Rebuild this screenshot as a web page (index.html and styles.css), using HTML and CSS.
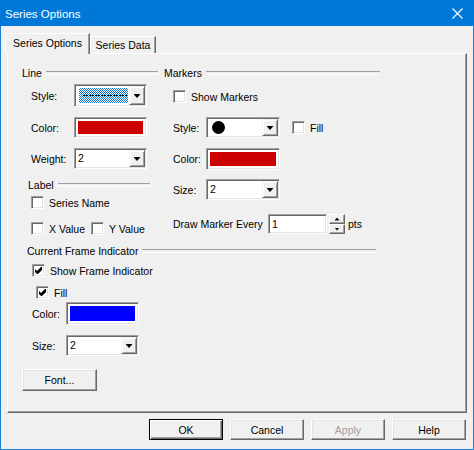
FILE: index.html
```html
<!DOCTYPE html>
<html lang="en">
<head>
<meta charset="utf-8">
<title>Series Options</title>
<link rel="stylesheet" href="styles.css">
</head>
<body>
<div class="window">
  <div class="titlebar">
    <span class="title">Series Options</span>
    <svg class="close" width="11" height="11" viewBox="0 0 11 11"><path d="M0.5 0.5L10.5 10.5M10.5 0.5L0.5 10.5" stroke="#fff" stroke-width="1.1" fill="none"/></svg>
  </div>
  <div class="client">
    <div class="tabs">
      <div class="tab active">Series Options</div>
      <div class="tab inactive">Series Data</div>
    </div>
    <div class="panel">
      <div class="cols">
        <div class="col col-left">
          <div class="group-h"><span>Line</span></div>
          <div class="row r-lstyle">
            <span class="lbl lw-left">Style:</span>
            <div class="combo w-73 h-23">
              <div class="field pattern"><span class="dotline"></span></div>
              <span class="drop"><i class="arrow"></i></span>
            </div>
          </div>
          <div class="row r-lcolor">
            <span class="lbl lw-left">Color:</span>
            <div class="swatch w-73 h-21"><span class="fill red"></span></div>
          </div>
          <div class="row r-weight">
            <span class="lbl lw-left">Weight:</span>
            <div class="combo w-73 h-21"><div class="field">2</div><span class="drop"><i class="arrow"></i></span></div>
          </div>
          <div class="group-h h-label"><span>Label</span></div>
          <div class="row r-sname">
            <label class="chk"><span class="box"></span>Series Name</label>
          </div>
          <div class="row r-xy">
            <label class="chk chk-x"><span class="box"></span>X Value</label>
            <label class="chk"><span class="box"></span>Y Value</label>
          </div>
        </div>
        <div class="col col-right">
          <div class="group-h"><span>Markers</span></div>
          <div class="row r-show">
            <label class="chk"><span class="box"></span>Show Markers</label>
          </div>
          <div class="row r-mstyle">
            <span class="lbl lw-right">Style:</span>
            <div class="combo w-74 h-21">
              <div class="field"><span class="dot"></span></div>
              <span class="drop"><i class="arrow"></i></span>
            </div>
            <label class="chk chk-mfill"><span class="box"></span>Fill</label>
          </div>
          <div class="row r-mcolor">
            <span class="lbl lw-right">Color:</span>
            <div class="swatch w-74 h-22"><span class="fill red"></span></div>
          </div>
          <div class="row r-msize">
            <span class="lbl lw-right">Size:</span>
            <div class="combo w-74 h-21"><div class="field">2</div><span class="drop"><i class="arrow"></i></span></div>
          </div>
          <div class="row r-draw">
            <span class="lbl lw-draw">Draw Marker Every</span>
            <div class="edit">1</div>
            <div class="spin">
              <span class="spin-btn"><i class="up"></i></span>
              <span class="spin-btn"><i class="down"></i></span>
            </div>
            <span class="pts">pts</span>
          </div>
        </div>
      </div>
      <div class="bottom">
        <div class="group-h h-cfi"><span>Current Frame Indicator</span></div>
        <div class="row r-sfi">
          <label class="chk"><span class="box"><svg class="tick" width="7" height="7" viewBox="0 0 7 7"><polygon points="0,2 2,4 6,0 7,0 7,3 3,7 2,7 0,5" fill="#000"/></svg></span>Show Frame Indicator</label>
        </div>
        <div class="row r-ffill">
          <label class="chk"><span class="box"><svg class="tick" width="7" height="7" viewBox="0 0 7 7"><polygon points="0,2 2,4 6,0 7,0 7,3 3,7 2,7 0,5" fill="#000"/></svg></span>Fill</label>
        </div>
        <div class="row r-fcolor">
          <span class="lbl lw-bottom">Color:</span>
          <div class="swatch w-73 h-23"><span class="fill blue"></span></div>
        </div>
        <div class="row r-fsize">
          <span class="lbl lw-bottom">Size:</span>
          <div class="combo w-73 h-21"><div class="field">2</div><span class="drop"><i class="arrow"></i></span></div>
        </div>
        <div class="btn btn-font">Font...</div>
      </div>
    </div>
    <div class="buttons">
      <div class="btn default">OK</div>
      <div class="btn">Cancel</div>
      <div class="btn disabled">Apply</div>
      <div class="btn">Help</div>
    </div>
  </div>
</div>
</body>
</html>
```

FILE: styles.css
```css
* { box-sizing: border-box; }
html, body { margin: 0; padding: 0; }
body {
  width: 474px;
  height: 450px;
  overflow: hidden;
  background: #f0f0f0;
  font-family: "Liberation Sans", Arial, sans-serif;
  font-size: 10.5px;
  color: #000;
}
.window {
  width: 474px;
  height: 450px;
  display: flex;
  flex-direction: column;
  background: #f0f0f0;
}
.titlebar {
  height: 26px;
  flex: none;
  background: #0078d7;
  display: flex;
  align-items: center;
  justify-content: space-between;
  padding: 0 11px 0 5px;
}
.title {
  color: #fff;
  font-size: 11.5px;
  margin-top: 1px;
}
.close { display: block; margin-top: 1px; }
.client {
  flex: 1;
  border: 1px solid #1a7fd6;
  border-top: none;
  padding: 7px 6px 0 6px;
  display: flex;
  flex-direction: column;
}

/* tabs */
.tabs {
  display: flex;
  align-items: flex-end;
  margin-left: -2px;
  position: relative;
  z-index: 1;
}
.tab {
  background: #f0f0f0;
  display: flex;
  justify-content: center;
  border-top: 1px solid #fff;
  border-left: 1px solid #fff;
  border-right: 1px solid #696969;
  box-shadow: inset -1px 0 #a0a0a0;
}
.tab.active {
  width: 85px;
  height: 21px;
  margin-bottom: -1px;
  padding-top: 3px;
}
.tab.inactive {
  width: 66px;
  height: 17px;
  padding-top: 2px;
}

/* panel */
.panel {
  height: 360px;
  flex: none;
  border: 1px solid;
  border-color: #fff #696969 #696969 #fff;
  box-shadow: inset -1px -1px #a0a0a0;
  padding: 12px 0 0 14px;
}
.cols { display: flex; gap: 6px; }
.col-left { width: 136px; }
.col-right { width: 216px; }

.group-h {
  display: flex;
  align-items: center;
  gap: 4px;
  height: 13px;
  white-space: nowrap;
}
.group-h::after {
  content: "";
  flex: 1;
  height: 2px;
  border-top: 1px solid #a0a0a0;
  border-bottom: 1px solid #fff;
}
.h-label { margin: 9px 8px 0 6px; }
.h-cfi { margin: 9px 0 0 5px; width: 349px; }

.row { display: flex; align-items: center; white-space: nowrap; }
.col .row { margin-left: 9px; }

.lbl { flex: none; }
.lw-left { width: 43px; }
.lw-right { width: 33px; }
.lw-bottom { width: 34px; }
.lw-draw { width: 95px; }

.r-lstyle { margin-top: 5px; }
.r-lcolor { margin-top: 10px; }
.r-weight { margin-top: 10px; }
.r-sname { margin-top: 5px; }
.r-xy { margin-top: 13px; }
.r-show { margin-top: 11px; }
.r-mstyle { margin-top: 14px; }
.r-mcolor { margin-top: 10px; }
.r-msize { margin-top: 9px; }
.r-draw { margin-top: 14px; }

.bottom .row { margin-left: 10px; }
.r-sfi { margin-top: 7px; }
.bottom .r-ffill { margin-left: 14px; margin-top: 9px; }
.r-fcolor { margin-top: 3px; }
.r-fsize { margin-top: 10px; }

/* sizes */
.w-73 { width: 73px; }
.w-74 { width: 74px; }
.h-21 { height: 21px; }
.h-22 { height: 22px; }
.h-23 { height: 23px; }

/* sunken controls */
.combo, .swatch, .edit, .box {
  border: 1px solid;
  border-color: #a0a0a0 #fff #fff #a0a0a0;
  box-shadow: inset 1px 1px #696969, inset -1px -1px #e3e3e3;
  background: #fff;
}
.combo {
  display: flex;
  padding: 2px 2px 2px 2px;
  flex: none;
}
.combo .field {
  flex: 1;
  display: flex;
  align-items: center;
  padding-left: 1px;
  line-height: 1;
}
.combo .drop {
  width: 16px;
  flex: none;
  margin: -1px -1px -1px 0;
  background: #f0f0f0;
  border: 1px solid;
  border-color: #f0f0f0 #696969 #696969 #f0f0f0;
  box-shadow: inset 1px 1px #fff, inset -1px -1px #a0a0a0;
  display: flex;
  align-items: center;
  justify-content: center;
}
.arrow {
  display: block;
  width: 7px;
  height: 4px;
  background: #000;
  clip-path: polygon(0 0, 100% 0, 50% 100%);
  margin-top: 1px;
}
.pattern {
  margin: 1px 1px 1px 2px;
  padding: 0 !important;
  background: repeating-conic-gradient(#0a78d8 0 25%, #fff 0 50%) 0 0 / 2px 2px;
  position: relative;
}
.dotline {
  flex: 1;
  height: 1px;
  margin: 0 1px 0 4px;
  background: repeating-linear-gradient(90deg, #000 0 2px, transparent 2px 3px);
}
.dot {
  width: 13px;
  height: 13px;
  border-radius: 50%;
  background: #000;
  margin-left: 2px;
}

.swatch { padding: 3px; flex: none; }
.swatch .fill { display: block; width: 100%; height: 100%; }
.red { background: #cc0000; }
.blue { background: #0000ff; }

.edit {
  width: 59px;
  height: 20px;
  padding: 2px 3px;
  line-height: 15px;
}
.spin {
  margin-left: 2px;
  width: 16px;
  height: 20px;
  display: flex;
  flex-direction: column;
}
.spin-btn {
  flex: 1;
  background: #f0f0f0;
  border: 1px solid;
  border-color: #fff #696969 #696969 #fff;
  box-shadow: inset -1px -1px #a0a0a0;
  display: flex;
  align-items: center;
  justify-content: center;
}
.spin-btn i {
  display: block;
  width: 5px;
  height: 3px;
  background: #000;
}
.spin-btn .up { clip-path: polygon(50% 0, 100% 100%, 0 100%); }
.spin-btn .down { clip-path: polygon(0 0, 100% 0, 50% 100%); }
.pts { margin-left: 3px; }

/* checkboxes */
.chk {
  display: flex;
  align-items: center;
  gap: 5px;
  white-space: nowrap;
}
.box {
  width: 13px;
  height: 13px;
  flex: none;
  display: flex;
  align-items: center;
  justify-content: center;
}
.tick { display: block; }
.chk-x { width: 60px; }
.chk-mfill { margin-left: 12px; }

/* buttons */
.btn {
  width: 74px;
  height: 21px;
  background: #f0f0f0;
  border: 1px solid;
  border-color: #fff #696969 #696969 #fff;
  box-shadow: inset -1px -1px #a0a0a0, inset 1px 1px #e3e3e3;
  display: flex;
  align-items: center;
  justify-content: center;
}
.btn.default {
  border-color: #000;
  box-shadow: inset 1px 1px #fff, inset -1px -1px #696969, inset -2px -2px #a0a0a0;
}
.btn.disabled { color: #a0a0a0; }
.btn-font {
  width: 75px;
  height: 22px;
  margin-top: 13px;
}
.buttons {
  display: flex;
  justify-content: flex-end;
  gap: 7px;
  margin-top: 6px;
  margin-right: 1px;
}
```
